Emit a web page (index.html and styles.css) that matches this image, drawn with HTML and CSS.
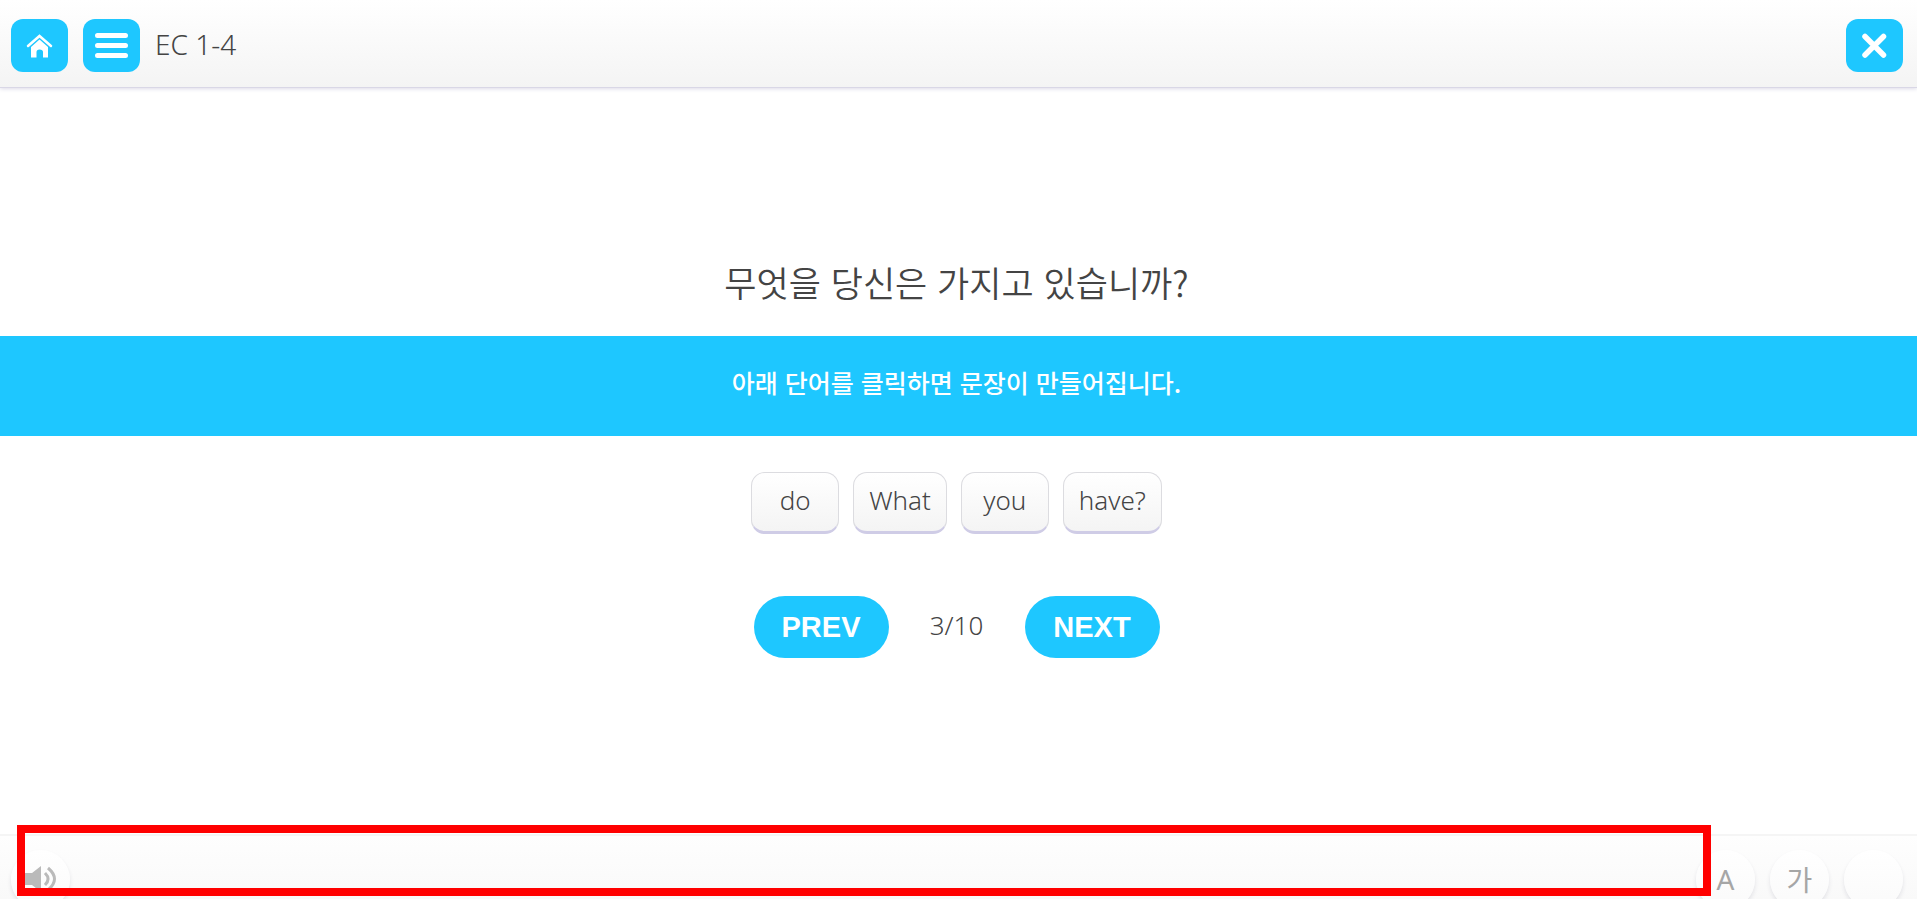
FILE: index.html
```html
<!DOCTYPE html>
<html lang="ko">
<head>
    <meta charset="UTF-8">
    <meta name="viewport" content="width=device-width, initial-scale=1.0">
    <title>EC 1-4</title>
    <link rel="stylesheet" href="styles.css">
</head>
<body>
    <header class="header">
        <button type="button" class="icon-btn" aria-label="Home">
            <svg width="27" height="24" viewBox="0 0 27 24">
                <path d="M2 12 L13.500 2 L25 12" fill="none" stroke="#fff" stroke-width="2.500" stroke-linecap="round" stroke-linejoin="miter"/>
                <path d="M5 13 L13.500 5.500 L22 13 V23.500 H17 V18 Q17 15.500 13.500 15.500 Q10.500 15.500 10.500 18 V23.500 H5 Z" fill="#fff"/>
            </svg>
        </button>
        <button type="button" class="icon-btn" aria-label="Menu">
            <svg width="33" height="25" viewBox="0 0 33 25">
                <path d="M2.500 2.500 H30.500 M2.500 12.500 H30.500 M2.500 22.500 H30.500" fill="none" stroke="#fff" stroke-width="5" stroke-linecap="round"/>
            </svg>
        </button>
        <h1 class="title">EC 1-4</h1>
        <button type="button" class="icon-btn close" aria-label="Close">
            <svg width="26" height="26" viewBox="0 0 26 26">
                <path d="M3 3.500 L21.500 22 M21.500 3.500 L3 22" fill="none" stroke="#fff" stroke-width="5.500" stroke-linecap="round"/>
            </svg>
        </button>
    </header>

    <main class="quiz">
        <h2 class="question">무엇을 당신은 가지고 있습니까?</h2>
        <p class="guide">아래 단어를 클릭하면 문장이 만들어집니다.</p>
        <div class="words">
            <button type="button" class="word">do</button>
            <button type="button" class="word">What</button>
            <button type="button" class="word">you</button>
            <button type="button" class="word">have?</button>
        </div>
        <div class="pager">
            <button type="button" class="page-btn">PREV</button>
            <span class="count">3/10</span>
            <button type="button" class="page-btn">NEXT</button>
        </div>
    </main>

    <footer class="footer">
        <button type="button" class="round-btn" aria-label="Sound">
            <svg width="32" height="26" viewBox="0 0 32 26">
                <path d="M0 7 H7 L16 0 V26 L7 19 H0 Z" fill="#bababa"/>
                <path d="M20 7 Q26 13 20 19 M23 2 Q36 13 23 24" fill="none" stroke="#bababa" stroke-width="3"/>
            </svg>
        </button>
        <div class="lang">
            <button type="button" class="round-btn">A</button>
            <button type="button" class="round-btn">가</button>
            <button type="button" class="round-btn" aria-label="None"></button>
        </div>
        <div class="highlight"></div>
    </footer>
</body>
</html>
```

FILE: styles.css
```css
* {
    box-sizing: border-box;
}
body {
    margin: 0;
    height: 100vh;
    overflow: hidden;
    display: flex;
    flex-direction: column;
    background-color: #fff;
    color: #444;
    font-family: "Noto Sans", "Noto Sans CJK KR", sans-serif;
    font-weight: 300;
}
button {
    padding: 0;
    border: none;
    color: inherit;
    font: inherit;
    cursor: pointer;
}
.header {
    display: flex;
    align-items: center;
    gap: 15px;
    padding: 19px 14px 15px 11px;
    background: linear-gradient(#fff, #f4f4f4);
    border-bottom: 1px solid #d9d7e6;
    box-shadow: 0 1px 4px #dddbe8;
}
.icon-btn {
    display: flex;
    align-items: center;
    justify-content: center;
    width: 57px;
    height: 53px;
    border-radius: 12px;
    background-color: #1ec7ff;
}
.title {
    margin: 0;
    padding-bottom: 4px;
    font-size: 28px;
    font-weight: 300;
    line-height: 36px;
}
.close {
    margin-left: auto;
}
.quiz {
    flex: 1;
    padding-top: 168px;
    text-align: center;
}
.question {
    margin: 0;
    padding-right: 4px;
    font-family: "Noto Sans CJK KR", sans-serif;
    font-size: 35px;
    font-weight: 350;
    line-height: 52px;
}
.guide {
    margin: 28px 0 36px;
    padding: 0 4px 8px 0;
    background-color: #1ec7ff;
    color: #fff;
    font-family: "Noto Sans CJK KR", sans-serif;
    font-size: 25px;
    font-weight: 500;
    line-height: 92px;
}
.words {
    display: flex;
    justify-content: center;
    gap: 14px;
    padding-right: 4px;
}
.word {
    min-width: 88px;
    height: 62px;
    padding: 0 15px 4px;
    border: 1px solid #dcdce0;
    border-bottom: 3px solid #cfcce6;
    border-radius: 14px;
    background: linear-gradient(#fff, #f4f4f4);
    font-size: 26px;
}
.pager {
    display: flex;
    align-items: center;
    justify-content: center;
    margin-top: 62px;
    padding-right: 4px;
}
.page-btn {
    width: 135px;
    height: 62px;
    border-radius: 31px;
    background-color: #1ec7ff;
    color: #fff;
    font-family: "Liberation Sans", Arial, sans-serif;
    font-size: 29px;
    font-weight: 700;
}
.count {
    width: 136px;
    padding-bottom: 4px;
    font-size: 26px;
}
.footer {
    position: relative;
    display: flex;
    justify-content: space-between;
    height: 65px;
    padding: 14px 14px 0 11px;
    border-top: 2px solid #f5f5f5;
    background: linear-gradient(#fefefe, #f9f9f9);
}
.lang {
    display: flex;
    gap: 15px;
}
.round-btn {
    display: flex;
    align-items: center;
    justify-content: center;
    width: 59px;
    height: 59px;
    padding-bottom: 2px;
    border-radius: 50%;
    background: linear-gradient(#fff, #fafafa);
    box-shadow: 0 3px 4px #e2e2e6;
    color: #a6a6a6;
    font-size: 28px;
    font-weight: 400;
}
/* red frame over the bar, stops before the language buttons */
.highlight {
    position: absolute;
    top: -11px;
    right: 206px;
    bottom: 3px;
    left: 17px;
    border: 8px solid #f00;
    pointer-events: none;
}
```
